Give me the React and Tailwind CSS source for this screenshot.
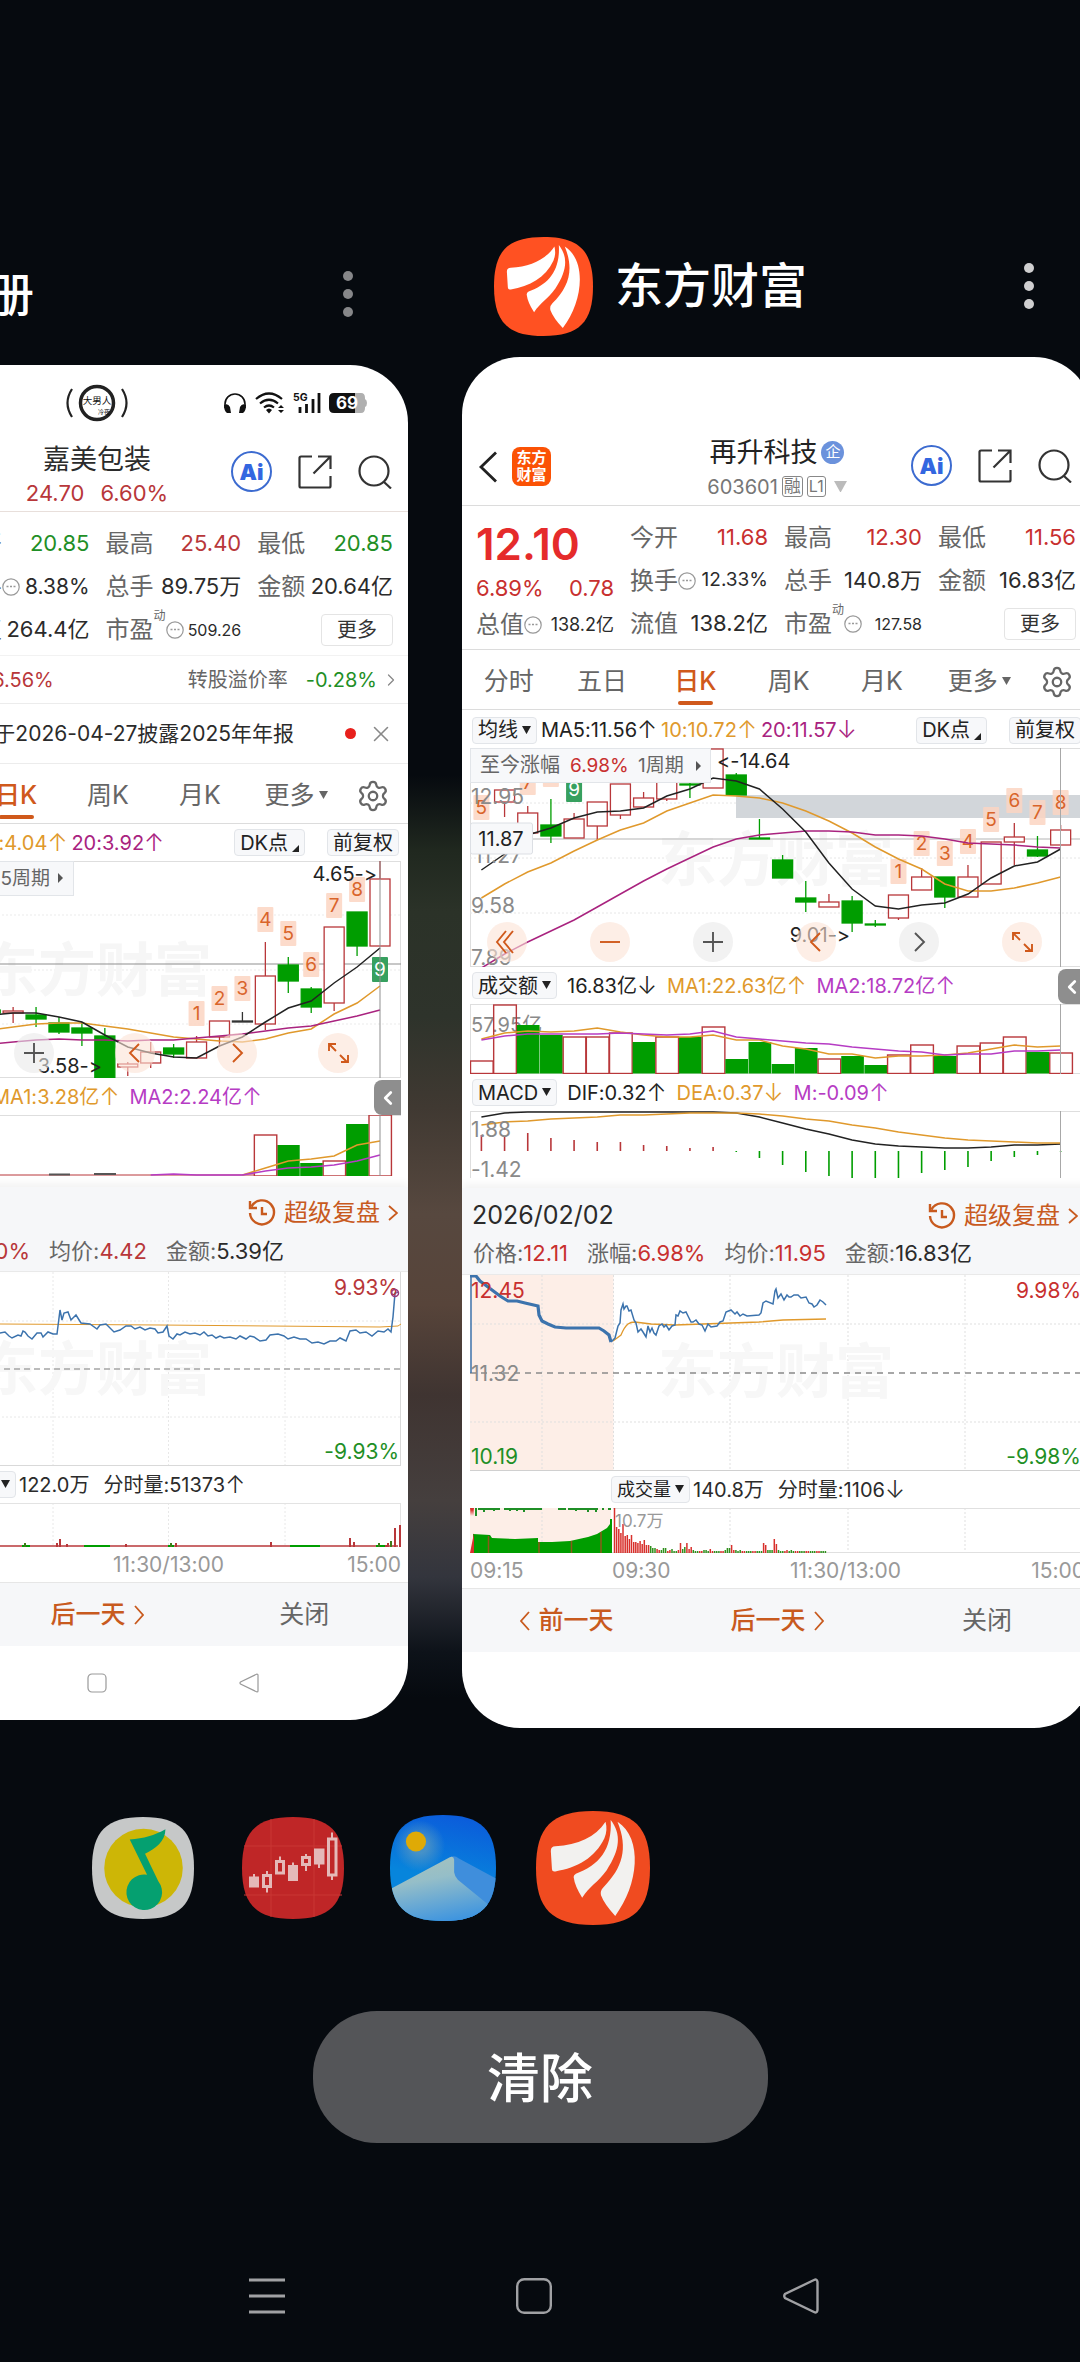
import React from 'react';
import { Settings, X, ChevronLeft, ChevronRight } from 'lucide-react';

const RED = '#b8373a';
const GREEN = '#009d00';
const ORANGE = '#e0992c';
const PURPLE = '#a9237f';
const VIOLET = '#b63cc4';
const BLUE = '#3c73ad';
const SQUIRCLE = 'M50 0C86 0 100 14 100 50S86 100 50 100 0 86 0 50 14 0 50 0Z';

// turns a list of y values into polyline points with a fixed step
const series = (ys, start, step) => ys.map((y, i) => `${(start + i * step).toFixed(1)},${y}`).join(' ');

// [top, bottom, high, low, up]
const mainCandles = [
  null, [42, 54, 42, 69, 1], [65, 85, 58, 85, 1], [77, 88, 51, 95, 0], [71, 90, 65, 90, 1],
  [54, 78, 54, 92, 1], [36, 67, 36, 71, 1], [50, 59, 44, 59, 1], [20, 51, 20, 53, 1], [36, 37, 29, 50, 0],
  [1, 40, 1, 40, 1], [27, 47, 25, 47, 0], [90, 91, 71, 91, 0], [112, 130, 107, 130, 0], [150, 154, 133, 164, 0],
  [154, 159, 146, 159, 1], [153, 175, 148, 184, 0], [176, 177, 172, 179, 0], [147, 170, 147, 172, 1],
  [129, 142, 120, 142, 1], [129, 149, 129, 160, 0], [129, 149, 117, 149, 1], [94, 136, 94, 136, 1],
  [89, 94, 75, 117, 1], [102, 108, 88, 109, 0], [82, 97, 77, 97, 1],
];
const mainMa5 = [122, 106, 87, 80, 70, 64, 63, 60, 48, 41, 30, 33, 41, 61, 84, 115, 141, 158, 161, 157, 155, 146, 130, 118, 114, 101];
const mainMa10 = [150, 136, 124, 115, 103, 92, 82, 75, 63, 55, 47, 48, 50, 55, 63, 73, 85, 99, 111, 121, 136, 143, 143, 140, 135, 129];
const mainMa20 = [220, 206, 194, 183, 172, 159, 146, 133, 121, 110, 99, 91, 87, 85, 83, 83, 84, 87, 87, 88, 91, 95, 96, 97, 99, 100];
const mainMarks = [
  [0, 59, '5'], [2, 34, '7'], [3, 26, '8'], [4, 41, '9', 1], [18, 123, '1'], [19, 95, '2'], [20, 105, '3'],
  [21, 93, '4'], [22, 71, '5'], [23, 52, '6'], [24, 64, '7'], [25, 54, '8'],
];
const mainVolume = [
  [57, 1], [1, 1], [21, 0], [31, 0], [33, 1], [33, 1], [29, 1], [38, 0], [33, 1], [33, 0], [23, 1], [55, 0], [38, 0],
  [60, 0], [44, 0], [55, 1], [52, 0], [61, 0], [51, 1], [41, 1], [52, 0], [42, 1], [39, 1], [33, 1], [48, 0], [49, 1],
];
const volMa1 = [35, 29, 27, 28, 27, 24, 28, 31, 33, 33, 31, 36, 36, 42, 45, 50, 50, 54, 52, 52, 51, 49, 45, 41, 43, 42];
const volMa2 = [36, 32, 30, 30, 30, 30, 29, 30, 31, 30, 27, 33, 35, 37, 39, 40, 43, 45, 47, 48, 51, 50, 50, 47, 47, 46];
const macdBars = [24, 25, 22, 27, 29, 31, 31, 34, 35, 37, 36, 41, 47, 54, 61, 65, 67, 67, 67, 62, 59, 56, 50, 46, 44, 41];
const dif = [6, 2, 1, 1, 1, 1, 1, 1, 1, 1, 1, 2, 6, 12, 18, 23, 29, 33, 35, 36, 37, 37, 36, 34, 34, 33];
const dea = [14, 11, 10, 8, 7, 6, 4, 4, 3, 2, 2, 2, 3, 5, 8, 10, 14, 17, 21, 24, 27, 29, 30, 31, 32, 32];

// newest first
const sideCandles = [
  [18, 85, 0, 85, 1], [51, 85, 51, 95, 0], [66, 142, 66, 150, 1], [128, 146, 126, 152, 0], [104, 120, 96, 132, 0],
  [115, 163, 81, 169, 1], [160, 161, 151, 161, 2], [160, 176, 160, 185, 1], [181, 197, 175, 197, 1], [187, 193, 183, 197, 0],
  [191, 202, 181, 207, 1], [203, 206, 201, 215, 1], [175, 217, 167, 217, 0], [167, 172, 161, 185, 0],
  [162, 171, 156, 173, 0], [154, 158, 146, 166, 0], [150, 152, 146, 162, 1], [149, 152, 149, 152, 0],
];
const sideMa5 = [87, 106, 122, 140, 147, 161, 176, 185, 197, 196, 192, 186, 174, 161, 156, 152, 152, 154];
const sideMa10 = [125, 142, 153, 168, 172, 178, 181, 180, 178, 176, 172, 168, 165, 162, 162, 163, 166, 169];
const sideMa20 = [149, 155, 160, 165, 167, 170, 173, 175, 177, 179, 179, 180, 179, 179, 178, 179, 181, 183];
const sideMarks = [
  [8, 152, '1'], [7, 137, '2'], [6, 127, '3'], [5, 58, '4'], [4, 72, '5'], [3, 103, '6'], [2, 44, '7'], [1, 28, '8'], [0, 108, '9', 1],
];
const sideVolume = [[0, 1], [9, 0], [46, 1], [48, 0], [30, 0], [20, 1]];

const minuteVolume = [
  45, 26, 24, 20, 29, 17, 18, 14, 18, 11, 11, 10, 12, 9, 13, 8, 8, 7, 5, 5, 4, 3, 3, 5, 5, 2, 3, 4, 2, 2, 3, 10, 4, 6, 10, 4,
  6, 3, 2, 2, 2, 2, 3, 3, 2, 4, 2, 2, 2, 2, 2, 2, 3, 5, 5, 8, 3, 3, 2, 3, 2, 2, 2, 2, 2, 2, 2, 2, 2, 2, 10, 8, 3, 3, 3, 14, 9,
  3, 2, 2, 2, 3, 2, 3, 2, 2, 2, 2, 2, 2, 2, 2, 2, 2, 2, 2, 2, 2, 2, 2,
];

function Candles({ data, start, step, width }) {
  return data.map((c, i) => {
    if (!c) return null;
    const [top, bottom, high, low, kind] = c;
    const x = start + i * step;
    const color = kind === 1 ? RED : kind === 2 ? '#333' : GREEN;
    return (
      <g key={i} stroke={color} strokeWidth="1.3">
        <path d={`M${x} ${high}V${top}M${x} ${bottom}V${low}`} />
        <rect x={x - width / 2} y={top} width={width} height={bottom - top} fill={kind === 1 ? '#fff' : color} />
      </g>
    );
  });
}

function Marks({ data, start, step }) {
  return data.map(([i, y, label, sell]) => (
    <g key={i}>
      <rect x={start + i * step - 8} y={y - 12} width="16" height="25" rx="1" fill={sell ? '#37a05f' : '#fbd5c2'} fillOpacity={sell ? 1 : 0.85} />
      <text x={start + i * step} y={y + 7} textAnchor="middle" fontSize="19" fill={sell ? '#fff' : '#d9642a'}>{label}</text>
    </g>
  ));
}

function Bars({ data, start, step, bottom }) {
  return data.map(([top, up], i) => (
    <rect
      key={i}
      x={start + i * step}
      y={top}
      width={Math.abs(step) - 0.5}
      height={bottom - top}
      fill={up ? 'none' : GREEN}
      stroke={up ? RED : GREEN}
      strokeWidth={up ? 1.4 : 0}
    />
  ));
}

function EastMoneyIcon({ className, dim }) {
  return (
    <svg viewBox="0 0 100 100" className={className} aria-hidden="true">
      <path d={SQUIRCLE} fill={dim ? '#f04b20' : '#ff5122'} />
      <g fill={dim ? '#f2f1ef' : '#fff'}>
        <path d="M13 35Q13 31 17 31C37 30 52 23 61 9.500Q63 17 60 24C52 41 36 50 17 53Q14 53.500 14 51Z" />
        <path d="M65.500 8C75 20 74 34 62 52C54 63 47 66 40.500 76Q34 66 33 58Q33 56 35 55C55 48 67 34 65.500 8Z" />
        <path d="M71.500 9.500C94 24 90 65 69.500 92Q60 82 57 74Q56 70 59 67C76 50 81 33 71.500 9.500Z" />
      </g>
    </svg>
  );
}

function MusicIcon({ className }) {
  return (
    <svg viewBox="0 0 100 100" className={className} aria-hidden="true">
      <path d={SQUIRCLE} fill="#c6c8c8" />
      <circle cx="50.500" cy="50" r="38.500" fill="#cdb606" />
      <path d="M37 22C51 21 61 18 72 12C72 24 62 31 52 36L65 63A17.500 17.500 0 1 1 54 56.500L37 22Z" fill="#05a070" />
    </svg>
  );
}

function CandleIcon({ className }) {
  return (
    <svg viewBox="0 0 102 102" className={className} aria-hidden="true">
      <path d={SQUIRCLE} transform="scale(1.02)" fill="#bf2627" />
      <path d="M2 29H100M2 78H100M29 2V100M72 2V100" stroke="#c93635" strokeWidth="1" />
      <g fill="#e4b9b8">
        <path d="M7 59.500H17V70.500H7ZM11 57H13V60H11ZM46 48H56V64H46ZM50 45.500H52V49H50ZM72 31.500H82.500V47.500H72ZM76 47H78V51H76Z" />
        <path d="M24 54H26V58H24ZM24 70H26V75.500H24ZM37 39.500H39V43H37ZM63 37H65V39H63ZM63 48H65V54H63ZM89 15.500H91V21H89ZM89 59H91V63H89Z" />
      </g>
      <path d="M21.500 58.500H28.500V69.500H21.500ZM34.500 44.500H41.500V56H34.500ZM60.500 40.500H67.500V47.500H60.500ZM86.500 22H94V58H86.500Z" fill="none" stroke="#e4b9b8" strokeWidth="3" />
    </svg>
  );
}

function GalleryIcon({ className }) {
  return (
    <svg viewBox="0 0 100 100" className={className} aria-hidden="true">
      <defs>
        <linearGradient id="sky" x1="0.600" y1="0" x2="0.400" y2="1">
          <stop offset="0" stopColor="#0b5cdb" />
          <stop offset="0.600" stopColor="#0785dc" />
        </linearGradient>
        <linearGradient id="dune" x1="0.300" y1="0" x2="0.600" y2="1">
          <stop offset="0" stopColor="#a5c2bd" />
          <stop offset="0.350" stopColor="#95bec8" />
          <stop offset="1" stopColor="#3f95df" />
        </linearGradient>
        <radialGradient id="glow">
          <stop offset="0.300" stopColor="#5f9cc0" stopOpacity="0.700" />
          <stop offset="1" stopColor="#5f9cc0" stopOpacity="0" />
        </radialGradient>
        <clipPath id="galleryClip">
          <path d={SQUIRCLE} />
        </clipPath>
      </defs>
      <g clipPath="url(#galleryClip)">
        <rect width="100" height="100" fill="url(#sky)" />
        <circle cx="28" cy="29" r="24" fill="url(#glow)" />
        <circle cx="24.500" cy="25" r="9.500" fill="#dfaa06" />
        <path d="M55 41Q60 37 65 41L100 60V100H50Z" fill="#3f8edc" />
        <path d="M0 70L56 40Q60 38 60.500 42V54Q61 58 64 61L92 84V100H0Z" fill="url(#dune)" />
      </g>
    </svg>
  );
}

const MoreDots = () => (
  <svg viewBox="0 0 10 46" className="w-[10px] h-[46px]" fill="currentColor">
    <circle cx="5" cy="5" r="5" />
    <circle cx="5" cy="23" r="5" />
    <circle cx="5" cy="41" r="5" />
  </svg>
);

const Caret = ({ className = 'w-[9px]' }) => (
  <svg viewBox="0 0 10 9" className={className} fill="currentColor" aria-hidden="true">
    <path d="M0 0H10L5 9Z" />
  </svg>
);

const InfoDots = () => (
  <svg viewBox="0 0 18 18" className="w-[18px] h-[18px] shrink-0 text-[#999]" aria-hidden="true">
    <circle cx="9" cy="9" r="8.200" fill="none" stroke="currentColor" strokeWidth="1.200" />
    <path d="M4.500 8.500h2M8 8.500h2M11.500 8.500h2" stroke="currentColor" strokeWidth="1.500" />
  </svg>
);

// indicator reading with its trend arrow
const Reading = ({ children, dir, color = 'text-[#222]' }) => (
  <span className={`flex items-center ${color}`}>
    {children}
    <span className="text-[24px] leading-6 font-light">{dir === 'up' ? '↑' : '↓'}</span>
  </span>
);

function HeaderActions({ className }) {
  return (
    <div className={`flex items-center justify-end gap-[26px] pb-[5px] ${className}`}>
      <button aria-label="AI" className="w-[41px] h-[41px] rounded-full border-2 border-[#3c6bd0] text-[#3366e0] font-black text-[22px] leading-none">
        Ai
      </button>
      <button aria-label="分享" className="text-[#333]">
        <svg viewBox="0 0 34 34" className="w-[34px] h-[34px]" fill="none" stroke="currentColor" strokeWidth="2.200">
          <path d="M14 1.500H3Q1.500 1.500 1.500 3V31Q1.500 32.500 3 32.500H31Q32.500 32.500 32.500 31V21" />
          <path d="M20 1.500H32.500V14M32.500 1.500L15.500 18.500" />
        </svg>
      </button>
      <button aria-label="搜索" className="text-[#333]">
        <svg viewBox="0 0 34 34" className="w-[34px] h-[34px]" fill="none" stroke="currentColor" strokeWidth="2.200">
          <circle cx="16" cy="16" r="14.500" />
          <path d="M26 27L33 33.500" />
        </svg>
      </button>
    </div>
  );
}

function Cell({ label, value, info, sup, size = 'text-[22px]', color = 'text-[#2b2b2b]' }) {
  return (
    <div className="flex items-center h-[43px] whitespace-nowrap">
      <span className="text-[24px] text-[#666]">{label}</span>
      {sup && <span className="text-[12px] text-[#666] self-start leading-4">{sup}</span>}
      {info && <InfoDots />}
      <span className={`ml-auto ${size} ${color}`}>{value}</span>
    </div>
  );
}

const MoreButton = () => (
  <div className="flex items-center justify-end h-[43px]">
    <button className="w-[72px] h-8 rounded border border-[#e4e4e4] text-[20px] leading-none text-[#333]">更多</button>
  </div>
);

function Tabs() {
  const tabs = ['分时', '五日', '日K', '周K', '月K', '更多'];
  return (
    <div className="flex items-center h-[60px] border-b border-[#dcdcdc] text-[25px] text-[#666]">
      {tabs.map((t) => (
        <button key={t} className="relative flex-1 h-full pt-1 flex items-center justify-center gap-1">
          <span className={t === '日K' ? 'text-[#d0591b] font-medium' : t === '更多' ? 'ml-2' : ''}>{t}</span>
          {t === '更多' && <Caret />}
          {t === '日K' && <span className="absolute bottom-1 w-[35px] h-1 rounded-full bg-[#d0591b]" />}
        </button>
      ))}
      <button aria-label="设置" className="w-[70px] pt-1 flex justify-center">
        <Settings size={34} strokeWidth={1.6} />
      </button>
    </div>
  );
}

const Chip = ({ children, size = 'text-[20px]' }) => (
  <button className={`flex items-center gap-1 h-[27px] px-[5px] rounded border border-[#e2e5e9] bg-[#f7f8fa] ${size} leading-none text-[#222] whitespace-nowrap shrink-0`}>
    {children}
  </button>
);

const ChartChips = () => (
  <div className="flex gap-[22px] shrink-0">
    <Chip>
      DK点
      <svg viewBox="0 0 8 8" className="w-[7px] self-end mb-[3px]" fill="currentColor"><path d="M8 0V8H0Z" /></svg>
    </Chip>
    <Chip>前复权</Chip>
  </div>
);

function ChartTools({ all }) {
  const pink = 'bg-[#fbe3d6]/60 text-[#d0591b]';
  const gray = 'bg-[#e9e9ea]/60 text-[#555]';
  const tools = [
    { name: '最早', d: 'M19 9L10 20L19 31M26 9L17 20L26 31', tone: pink },
    { name: '缩小', d: 'M10 20H30', tone: pink },
    { name: '放大', d: 'M10 20H30M20 10V30', tone: gray },
    { name: '左移', d: 'M24 11L15 20L24 29', tone: pink },
    { name: '右移', d: 'M16 11L25 20L16 29', tone: all ? gray : pink },
    { name: '全屏', d: 'M11 18V11H18M11 11L18 18M30 22V29H23M29 29L22 22', tone: pink },
  ];
  return (
    <div className="absolute inset-x-0 bottom-[5px] pl-[25px] pr-[50px] flex justify-between">
      {tools.map((t) => (
        <button key={t.name} aria-label={t.name} className={`w-10 h-10 rounded-full ${t.tone}`}>
          <svg viewBox="0 0 40 40" fill="none" stroke="currentColor" strokeWidth="1.900"><path d={t.d} /></svg>
        </button>
      ))}
    </div>
  );
}

const SideHandle = () => (
  <button aria-label="展开" className="absolute right-0 bottom-0 w-[27px] h-[35px] rounded-l-lg bg-[#8e8e8e] text-white flex items-center justify-center">
    <ChevronLeft size={22} strokeWidth={3} />
  </button>
);

const ReplayLink = () => (
  <a href="#replay" className="flex items-center gap-2 text-[24px] text-[#c85a1e]">
    <svg viewBox="0 0 28 28" className="w-7 h-7" fill="none" stroke="currentColor" strokeWidth="2.400">
      <path d="M3.500 7.500A12 12 0 1 1 2 14M2 2V9H9" />
      <path d="M14 8V15H19" />
    </svg>
    超级复盘
    <svg viewBox="0 0 10 16" className="w-[10px] h-4" fill="none" stroke="currentColor" strokeWidth="1.800"><path d="M1 1L9 8L1 15" /></svg>
  </a>
);

const Pair = ({ label, value, color = 'text-[#2b2b2b]' }) => (
  <span className="text-[#666] whitespace-nowrap">{label}:<span className={color}>{value}</span></span>
);

const DayNav = () => (
  <div className="flex items-center h-16 bg-[#f6f7f9] border-t border-[#e6e6e6] text-[25px]">
    <button className="flex-1 flex items-center justify-center gap-2 text-[#c85a1e] font-medium">
      <svg viewBox="0 0 10 20" className="w-[10px] h-5" fill="none" stroke="currentColor" strokeWidth="1.800"><path d="M9 1L1 10L9 19" /></svg>
      前一天
    </button>
    <button className="flex-1 flex items-center justify-center gap-2 text-[#c85a1e] font-medium">
      后一天
      <svg viewBox="0 0 10 20" className="w-[10px] h-5" fill="none" stroke="currentColor" strokeWidth="1.800"><path d="M1 1L9 10L1 19" /></svg>
    </button>
    <button className="flex-1 text-[#666]">关闭</button>
  </div>
);

function StatusBar() {
  return (
    <div className="grid grid-cols-[1fr_auto_1fr] items-center h-[72px] pt-1 text-black">
      <span />
      <svg viewBox="0 0 64 38" className="w-16 h-[38px]">
        <g fill="none" stroke="#222">
          <path d="M7 5Q-2 19 7 33M57 5Q66 19 57 33" strokeWidth="2.200" />
          <circle cx="32" cy="19" r="16.500" strokeWidth="3.500" />
        </g>
        <text x="32" y="20" textAnchor="middle" fontSize="9.500" fill="#111">大男人</text>
        <text x="39" y="30" textAnchor="middle" fontSize="6" fill="#111">冷夜</text>
      </svg>
      <div className="flex items-center justify-end gap-2 pr-[41px]">
        <svg viewBox="0 0 24 22" className="w-6 h-[22px]">
          <path d="M2 16V12A10 10 0 0 1 22 12V16" fill="none" stroke="#111" strokeWidth="1.600" />
          <path d="M1 13Q5 11 7 15L8 21H4Q1 19 1 13ZM23 13Q19 11 17 15L16 21H20Q23 19 23 13Z" fill="#111" />
        </svg>
        <svg viewBox="0 0 30 22" className="w-[30px] h-[22px]">
          <path d="M1 7Q14 -4 27 7M5 11.500Q14 4 23 11.500M9 15.500Q14 11.500 19 15.500" fill="none" stroke="#111" strokeWidth="2.200" />
          <path d="M11 18Q14 15 17 18L14 21.500ZM23 16L26 13L29 16ZM23 18L26 21L29 18Z" fill="#111" />
        </svg>
        <svg viewBox="0 0 28 22" className="w-7 h-[22px]">
          <text x="0" y="9" fontSize="10.500" fontWeight="700" fill="#111">5G</text>
          <path d="M7 15V21M13.500 12V21M20 7V21M26 1V21" stroke="#111" strokeWidth="2.800" />
        </svg>
        <svg viewBox="0 0 38 20" className="w-[38px] h-5">
          <path d="M26 0H32Q36 0 36 5V6Q38 7 38 10T36 14V15Q36 20 32 20H26Z" fill="#b0b0b0" />
          <path d="M5 0H26V20H5Q0 20 0 15V5Q0 0 5 0Z" fill="#111" />
          <text x="18" y="16" textAnchor="middle" fontSize="17" fontWeight="700" fill="#fff">69</text>
        </svg>
      </div>
    </div>
  );
}

function SideCard() {
  return (
    <article className="relative w-[622px] shrink-0 bg-white rounded-[58px] overflow-hidden">
      <StatusBar />
      <header className="grid grid-cols-[1fr_auto_1fr] items-center h-[75px] border-b border-[#e8dfdb]">
        <span />
        <div className="text-center pt-[3px]">
          <h2 className="text-[27px] leading-[34px] text-[#2b2b2b]">嘉美包装</h2>
          <p className="flex gap-4 text-[22px] leading-[32px] text-[#b8373a]"><span>24.70</span><span>6.60%</span></p>
        </div>
        <HeaderActions className="pr-4" />
      </header>

      <section className="grid grid-cols-4 gap-x-4 pl-4 pr-[15px] pt-[10px] pb-1 border-b border-[#f2f2f2]">
        <div />
        <div>
          <Cell label="今开" value="20.85" color="text-[#1f8f26]" />
          <Cell label="换手" info value="8.38%" size="text-[21px]" />
          <Cell label="流值" value="264.4亿" />
        </div>
        <div>
          <Cell label="最高" value="25.40" color="text-[#b8373a]" />
          <Cell label="总手" value="89.75万" />
          <Cell label="市盈" sup="动" info size="text-[16px]" value="509.26" />
        </div>
        <div>
          <Cell label="最低" value="20.85" color="text-[#1f8f26]" />
          <Cell label="金额" value="20.64亿" />
          <MoreButton />
        </div>
      </section>

      <div className="flex items-center justify-end h-12 pr-[7px] border-b border-[#ececec] text-[20px]">
        <span className="text-[#b8373a]">6.56%</span>
        <span className="ml-[134px] text-[#666]">转股溢价率</span>
        <span className="ml-[18px] text-[#1f8f26]">-0.28%</span>
        <ChevronRight size={20} strokeWidth={1.5} className="ml-1 text-[#888]" />
      </div>
      <div className="flex items-center justify-end h-[60px] pr-[14px] border-b border-[#ececec] text-[21px] text-[#2b2b2b] whitespace-nowrap">
        公司将于2026-04-27披露2025年年报
        <span className="ml-[51px] w-[11px] h-[11px] rounded-full bg-[#e8201c]" />
        <button aria-label="关闭公告" className="ml-3 text-[#888]"><X size={26} strokeWidth={1.4} /></button>
      </div>

      <Tabs />

      <div className="flex items-center justify-end h-[37px] pr-[9px] gap-1 text-[20px] whitespace-nowrap">
        <Reading dir="up" color="text-[#e0992c]">10:4.04</Reading>
        <Reading dir="up" color="text-[#a9237f] mr-[66px]">20:3.92</Reading>
        <ChartChips />
      </div>

      <div className="relative pl-2 pr-[7px]">
        <svg viewBox="-206 0 607 217" className="block w-full h-auto">
          <path d="M-206 0.500H401M-206 216.500H401M400.500 0V217" stroke="#dedede" />
          <path d="M-206 54H401M-206 109H401M-206 163H401" stroke="#ebebeb" strokeDasharray="2 2" />
          <text x="-20" y="130" fontSize="58" fontWeight="700" fill="#f6f6f6">东方财富</text>
          <path d="M-206 103H401" stroke="#8f8f8f" />
          <Candles data={sideCandles} start={380} step={-22.93} width={20} />
          <g fill="none" strokeWidth="1.500">
            <polyline points={series(sideMa10, 380, -22.93)} stroke={ORANGE} />
            <polyline points={series(sideMa20, 380, -22.93)} stroke={PURPLE} />
            <polyline points={series(sideMa5, 380, -22.93)} stroke="#222" />
          </g>
          <Marks data={sideMarks} start={380} step={-22.93} />
          <path d="M380 0V217" stroke="#8f8f8f" />
          <rect x="-206" y="0.500" width="279.500" height="34" fill="#f7f8fa" stroke="#e2e5e9" />
          <text x="50" y="24" textAnchor="end" fontSize="19" fill="#666">5周期</text>
          <path d="M58 12L63 17L58 22Z" fill="#555" />
          <text x="377" y="20" textAnchor="end" fontSize="20" fill="#222">4.65-&gt;</text>
          <text x="102" y="212" textAnchor="end" fontSize="20" fill="#222">3.58-&gt;</text>
        </svg>
        <ChartTools />
      </div>

      <div className="relative flex items-center justify-end h-[37px] mr-[7px] pr-[139px] gap-[10px] text-[20px] whitespace-nowrap">
        <Reading dir="up" color="text-[#e0992c]">MA1:3.28亿</Reading>
        <Reading dir="up" color="text-[#b63cc4]">MA2:2.24亿</Reading>
        <SideHandle />
      </div>
      <div className="pl-2 pr-[7px]">
        <svg viewBox="-206 0 607 61" className="block w-full h-auto">
          <path d="M-206 0.500H401" stroke="#dedede" />
          <Bars data={sideVolume} start={369} step={-22.93} bottom={61} />
          <path d="M-206 60H255" stroke={RED} />
          <path d="M94 59H116M49 59.500H70" stroke="#555" strokeWidth="2" />
          <g fill="none" strokeWidth="1.500">
            <polyline points={series([26, 30, 41, 44, 46, 53, 60], 380, -22.93)} stroke={ORANGE} />
            <polyline points={series([40, 46, 50, 52, 53, 56, 60, 60, 60, 59, 60], 380, -22.93)} stroke={VIOLET} />
          </g>
          <path d="M380 0V61" stroke="#8f8f8f" />
        </svg>
      </div>

      <div className="mt-[11px] h-[85px] bg-[#f6f7f9] border-b border-[#e9e9e9] shadow-[0_-4px_8px_#f3f3f3]">
        <div className="flex items-center justify-end h-[47px] pt-1 pr-[10px]"><ReplayLink /></div>
        <div className="flex items-center justify-end gap-[19px] h-[34px] pr-[124px] text-[22px]">
          <Pair label="涨幅" value="6.60%" color="text-[#b8373a]" />
          <Pair label="均价" value="4.42" color="text-[#b8373a]" />
          <Pair label="金额" value="5.39亿" />
        </div>
      </div>

      <div className="pl-2 pr-[7px]">
        <svg viewBox="-206 0 607 194" className="block w-full h-auto">
          <path d="M53 0V194M168.500 0V194M285 0V194M-206 49H401M-206 145H401" stroke="#e8e8e8" strokeDasharray="2 2" />
          <path d="M-206 193.500H401M400.500 0V194" stroke="#d9d9d9" />
          <text x="-20" y="118" fontSize="58" fontWeight="700" fill="#f7f7f7">东方财富</text>
          <path d="M-206 97H401" stroke="#a5a5a5" strokeWidth="1.500" strokeDasharray="6 4" />
          <path d="M-206 52H0L160 53L380 55L398 54L401 52" stroke={ORANGE} fill="none" />
          <polyline
            fill="none"
            stroke={BLUE}
            strokeWidth="1.500"
            points="-20,60 0,61 5,60 9,64 12,66 18,63 21,64 23,59 25,60 28,64 32,67 37,61 41,61 43,65 48,60 53,62 57,62 58,54 60,38 62,48 64,41 68,40 71,48 76,43 81,51 90,52 97,57 100,53 106,52 114,60 120,58 126,54 131,54 135,57 140,55 145,58 150,56 155,57 158,61 163,60 167,54 169,64 173,67 177,62 180,63 185,60 190,62 195,61 200,63 204,60 208,64 212,63 216,66 220,64 224,66 230,65 236,67 240,64 246,67 250,64 254,65 260,69 266,68 270,63 278,62 284,64 288,67 294,65 300,67 306,67 312,71 318,70 324,72 330,69 336,69 340,66 346,69 350,59 356,58 360,61 366,60 372,64 378,59 384,60 388,57 391,60 393,45 395,21 398,20"
          />
          <text x="399" y="23" textAnchor="end" fontSize="21" fill={RED}>9.93%</text>
          <text x="399" y="187" textAnchor="end" fontSize="21" fill="#1f8f26">-9.93%</text>
          <circle cx="395" cy="21" r="3.500" fill="none" stroke="#9b3a7a" strokeWidth="1.500" />
        </svg>
      </div>
      <div className="flex items-center h-[37px] pl-[151px] gap-[3px] text-[20px] text-[#2b2b2b] whitespace-nowrap">
        <Chip size="text-[18px]">成交量<Caret /></Chip>
        122.0万
        <span className="ml-2" />
        <Reading dir="up" color="text-[#2b2b2b]">分时量:51373</Reading>
      </div>
      <div className="pl-2 pr-[7px]">
        <svg viewBox="-206 0 607 44" className="block w-full h-auto">
          <path d="M53 0V44M168.500 0V44M285 0V44" stroke="#e8e8e8" strokeDasharray="2 2" />
          <path d="M-206 0.500H401M400.500 0V44" stroke="#e3e3e3" />
          <path d="M-206 43H398" stroke={RED} strokeWidth="1.500" />
          <path d="M22 43H30M84 43H110M168 43H174M290 43H320M376 43H385" stroke={GREEN} strokeWidth="2" />
          <path d="M60 44V36M57 44V40M67 44V41M126 44V41M176 44V40M271 44V39M350 44V35M354 44V39M386 44V42M388 44V40M395 44V25M400 44V22" stroke={RED} strokeWidth="2" />
          <path d="M25 44V40M171 44V40M379 44V40M391 44V38" stroke="#3f7a1a" strokeWidth="2" />
        </svg>
      </div>
      <div className="relative flex items-center justify-between h-[35px] pl-2 pr-[7px] text-[21px] text-[#999]">
        <span>09:15</span>
        <span className="absolute left-[327px]">11:30/13:00</span>
        <span>15:00</span>
      </div>
      <DayNav />
      <div className="flex items-center justify-center gap-[132px] h-[74px] text-[#999]">
        <span className="w-5" />
        <svg viewBox="0 0 20 20" className="w-5 h-5" fill="none" stroke="currentColor" strokeWidth="1.200"><rect x="1" y="1" width="18" height="18" rx="4" /></svg>
        <svg viewBox="0 0 20 20" className="w-5 h-5" fill="none" stroke="currentColor" strokeWidth="1.200"><path d="M19 2V18Q19 19 18 19L1.500 11Q0.500 10 1.500 9L18 1Q19 1 19 2Z" /></svg>
      </div>
    </article>
  );
}

function MainCard() {
  return (
    <article className="relative bg-white rounded-[58px] overflow-hidden">
      <header className="grid grid-cols-[1fr_auto_1fr] items-center h-[149px] pt-[74px] border-b border-[#dcdcdc]">
        <div className="flex items-center gap-[14px] pl-4 pb-[3px]">
          <button aria-label="返回" className="text-[#222]">
            <svg viewBox="0 0 20 32" className="w-5 h-8" fill="none" stroke="currentColor" strokeWidth="2.800"><path d="M18 1.500L3 16L18 30.500" /></svg>
          </button>
          <span className="w-[39px] h-[39px] rounded-lg bg-[#fb5205] text-white text-[15px] leading-[17px] font-bold text-center pt-[2px]">东方<br />财富</span>
        </div>
        <div className="flex flex-col items-center">
          <h2 className="flex items-center gap-1 pt-[3px] text-[27px] leading-[34px] text-[#222]">
            再升科技
            <span className="w-[23px] h-[23px] rounded-full bg-[#6b92dc] text-white text-[15px] leading-[22px] text-center">企</span>
          </h2>
          <p className="flex items-center gap-1 text-[20px] leading-[34px] text-[#777]">
            603601
            <span className="h-[21px] px-[1px] border border-[#888] rounded-[3px] text-[17px] leading-[19px]">融</span>
            <span className="h-[21px] px-[1px] border border-[#888] rounded-[3px] text-[16px] leading-[19px]">L1</span>
            <Caret className="w-[13px] ml-1 text-[#bbb]" />
          </p>
        </div>
        <HeaderActions className="pr-5" />
      </header>

      <section className="grid grid-cols-4 gap-x-4 pl-[14px] pr-4 pt-[10px] pb-1 border-b border-[#dcdcdc]">
        <div>
          <p className="h-14 text-[44px] leading-[56px] font-semibold text-[#e52b2b]">12.10</p>
          <p className="flex justify-between h-8 text-[22px] leading-8 text-[#c8302f]"><span>6.89%</span><span>0.78</span></p>
          <div className="flex items-center h-[41px] whitespace-nowrap">
            <span className="text-[24px] text-[#666]">总值</span>
            <InfoDots />
            <span className="ml-auto text-[18px] text-[#2b2b2b]">138.2亿</span>
          </div>
        </div>
        <div>
          <Cell label="今开" value="11.68" color="text-[#c8302f]" />
          <Cell label="换手" info size="text-[19px]" value="12.33%" />
          <Cell label="流值" value="138.2亿" />
        </div>
        <div>
          <Cell label="最高" value="12.30" color="text-[#c8302f]" />
          <Cell label="总手" value="140.8万" />
          <Cell label="市盈" sup="动" info size="text-[16px]" value="127.58" />
        </div>
        <div>
          <Cell label="最低" value="11.56" color="text-[#c8302f]" />
          <Cell label="金额" value="16.83亿" />
          <MoreButton />
        </div>
      </section>

      <Tabs />

      <div className="flex items-center h-[38px] pt-[2px] pl-[10px] pr-[11px] gap-1 text-[20px] whitespace-nowrap">
        <Chip>均线<Caret /></Chip>
        <Reading dir="up">MA5:11.56</Reading>
        <Reading dir="up" color="text-[#e0992c]">10:10.72</Reading>
        <Reading dir="down" color="text-[#a9237f] mr-auto">20:11.57</Reading>
        <ChartChips />
      </div>

      <div className="relative pl-2 pr-[7px]">
        <svg viewBox="0 0 615 219" className="block w-full h-auto">
          <path d="M0 0.500H615M0 218.500H615M0.500 0V219" stroke="#dedede" />
          <path d="M0 55H615M0 110H615M0 165H615" stroke="#e6e6e6" strokeDasharray="2 2" />
          <text x="188" y="133" fontSize="59" fontWeight="700" fill="#f6f6f6">东方财富</text>
          <rect x="266" y="47" width="349" height="23" fill="#d2d6da" />
          <path d="M0 91H615" stroke="#b5b5b5" />
          <Candles data={mainCandles} start={11.4} step={23.17} width={20} />
          <Marks data={mainMarks} start={11.4} step={23.17} />
          <g fill="none" strokeWidth="1.500">
            <polyline points={series(mainMa10, 11.4, 23.17)} stroke={ORANGE} />
            <polyline points={series(mainMa20, 11.4, 23.17)} stroke={PURPLE} />
            <polyline points={series(mainMa5, 11.4, 23.17)} stroke="#222" />
          </g>
          <g fontSize="21" fill="#8a8a8a">
            <text x="1" y="56">12.95</text>
            <text x="4" y="115">11.27</text>
            <text x="1" y="165">9.58</text>
            <text x="1" y="217">7.89</text>
          </g>
          <rect x="0.500" y="75" width="62" height="31" rx="2" fill="#f7f8fa" stroke="#dcdfe4" />
          <text x="31" y="98" textAnchor="middle" fontSize="20" fill="#222">11.87</text>
          <rect x="0.500" y="0.500" width="240" height="34" fill="#f7f8fa" stroke="#e2e5e9" />
          <g fontSize="20" fill="#666">
            <text x="10" y="24">至今涨幅</text>
            <text x="100" y="24" fill="#c8302f" fontSize="19">6.98%</text>
            <text x="168" y="24" fontSize="19">1周期</text>
          </g>
          <path d="M226 13L231 18L226 23Z" fill="#555" />
          <text x="247" y="20" fontSize="20" fill="#222">&lt;-14.64</text>
          <text x="380" y="194" textAnchor="end" fontSize="20" fill="#222">9.01-&gt;</text>
          <path d="M590.500 0V219" stroke="#a8a8a8" />
        </svg>
        <ChartTools all />
      </div>

      <div className="relative flex items-center h-[37px] pl-[10px] mr-[7px] gap-[10px] text-[20px] whitespace-nowrap">
        <Chip>成交额<Caret /></Chip>
        <Reading dir="down">16.83亿</Reading>
        <Reading dir="up" color="text-[#e0992c]">MA1:22.63亿</Reading>
        <Reading dir="up" color="text-[#b63cc4]">MA2:18.72亿</Reading>
        <SideHandle />
      </div>
      <div className="pl-2 pr-[7px]">
        <svg viewBox="0 0 615 70" className="block w-full h-auto">
          <path d="M0 0.500H615M0 69.500H615M0.500 0V70" stroke="#dedede" />
          <text x="1" y="28" fontSize="20" fill="#8a8a8a">57.95亿</text>
          <Bars data={mainVolume} start={0.5} step={23.17} bottom={69.5} />
          <g fill="none" strokeWidth="1.500">
            <polyline points={series(volMa1, 11.4, 23.17)} stroke={ORANGE} />
            <polyline points={series(volMa2, 11.4, 23.17)} stroke={VIOLET} />
          </g>
          <path d="M590.500 0V70" stroke="#a8a8a8" />
        </svg>
      </div>

      <div className="flex items-center h-[37px] pl-[10px] gap-[10px] text-[20px] whitespace-nowrap">
        <Chip>MACD<Caret /></Chip>
        <Reading dir="up">DIF:0.32</Reading>
        <Reading dir="down" color="text-[#e0992c]">DEA:0.37</Reading>
        <Reading dir="up" color="text-[#b63cc4]">M:-0.09</Reading>
      </div>
      <div className="pl-2 pr-[7px]">
        <svg viewBox="0 0 615 67" className="block w-full h-auto">
          <path d="M0 0.500H615M0.500 0V67" stroke="#dedede" />
          {macdBars.map((y, i) => (
            <path key={i} d={`M${11.4 + i * 23.17} 40V${y}`} stroke={y < 40 ? RED : GREEN} strokeWidth="1.6" />
          ))}
          <g fill="none" strokeWidth="1.500">
            <polyline points={series(dif, 11.4, 23.17)} stroke="#222" />
            <polyline points={series(dea, 11.4, 23.17)} stroke={ORANGE} />
          </g>
          <text x="1" y="26" fontSize="21" fill="#8a8a8a">1.88</text>
          <text x="1" y="66" fontSize="21" fill="#8a8a8a">-1.42</text>
          <path d="M590.500 0V67" stroke="#a8a8a8" />
        </svg>
      </div>

      <div className="mt-[10px] h-[87px] bg-[#f6f7f9] border-b border-[#e9e9e9] shadow-[0_-4px_8px_#f3f3f3]">
        <div className="flex items-center justify-between h-12 pt-2 pl-[10px] pr-[14px]">
          <h3 className="text-[25px] text-[#2b2b2b]">2026/02/02</h3>
          <ReplayLink />
        </div>
        <div className="flex items-center gap-[19px] h-[34px] pl-[11px] text-[22px]">
          <Pair label="价格" value="12.11" color="text-[#c8302f]" />
          <Pair label="涨幅" value="6.98%" color="text-[#c8302f]" />
          <Pair label="均价" value="11.95" color="text-[#c8302f]" />
          <Pair label="金额" value="16.83亿" />
        </div>
      </div>

      <div className="pl-2 pr-[7px]">
        <svg viewBox="0 0 615 196" className="block w-full h-auto">
          <rect width="143.500" height="196" fill="#fdeee7" />
          <path d="M72 0V196M143.500 0V196M260 0V196M378 0V196M495 0V196M0 49H615M0 147H615" stroke="#dfdfdf" strokeDasharray="2 2" />
          <path d="M0 195.500H615M614.500 0V196" stroke="#d0d0d0" />
          <text x="188" y="118" fontSize="59" fontWeight="700" fill="#f7f7f7">东方财富</text>
          <path d="M0 98H615" stroke="#8a8a8a" strokeWidth="1.300" strokeDasharray="6 5" />
          <path d="M143 66L151 60C156 48 160 47 165 47L181 49L205 50L261 48L289 47L313 45L356 44" stroke={ORANGE} fill="none" strokeWidth="1.300" />
          <g fill="none" stroke={BLUE}>
            <path d="M1 98V0" strokeWidth="1.500" />
            <polyline strokeWidth="3.200" points="0,1 6,1 10,6 14,9 22,15 30,21 38,26 47,26 55,28 68,31 69,40 72,46 78,49 85,52 96,53 129,53 134,56 139,60 141,67" />
            <polyline
              strokeWidth="1.500"
              points="141,67 145,63 148,51 150,48 151,35 153,29 154,34 156,31 157,31 159,36 161,35 164,45 166,48 168,57 171,54 173,57 176,62 178,51 180,57 182,53 184,58 186,60 189,51 192,49 194,52 196,50 199,55 202,51 205,50 206,40 208,41 210,36 213,38 216,37 219,43 221,47 223,47 226,45 229,49 232,50 235,56 238,49 241,52 247,51 250,47 253,46 256,37 261,35 265,39 267,37 270,41 273,39 277,41 289,40 291,38 293,28 296,26 303,29 305,16 306,14 308,23 311,19 314,25 317,20 319,22 321,22 324,20 328,20 331,23 336,22 339,28 342,29 344,32 347,30 350,25 353,27 356,30"
            />
          </g>
          <g fontSize="21">
            <text x="1" y="23" fill="#c8302f">12.45</text>
            <text x="1" y="106" fill="#8a8a8a">11.32</text>
            <text x="1" y="189" fill="#1f8f26">10.19</text>
            <text x="611" y="23" textAnchor="end" fill="#c8302f">9.98%</text>
            <text x="611" y="189" textAnchor="end" fill="#1f8f26">-9.98%</text>
          </g>
        </svg>
      </div>
      <div className="flex items-center h-[37px] pl-[149px] gap-[3px] text-[20px] text-[#2b2b2b] whitespace-nowrap">
        <Chip size="text-[18px]">成交量<Caret /></Chip>
        140.8万
        <span className="ml-2" />
        <Reading dir="down" color="text-[#2b2b2b]">分时量:1106</Reading>
      </div>
      <div className="pl-2 pr-[7px]">
        <svg viewBox="0 0 615 45" className="block w-full h-auto">
          <rect width="141" height="45" fill="#fdeee7" />
          <path d="M72 0V45M260 0V45M378 0V45M495 0V45" stroke="#dfdfdf" strokeDasharray="2 2" />
          <path d="M143 0.500H615M0 44.500H615" stroke="#e0e0e0" />
          <path d="M3 26L20 27L22 30L45 31L68 30V34L82 34L100 33L118 29L127 26L137 20L140 16V11H142V45H3Z" fill={GREEN} />
          <path d="M0 45L4 25V45ZM0 0H4L3 8L2 2L1 8Z" fill="#d8302c" />
          <path d="M6 0V8M8 1H30M14 2V4M24 2V3M34 1H72M40 1V3M47 1V3M54 1V4M60 1V2M88 1H96M98 1H128M106 2V3M118 2V4M126 2V4M132 1H134M138 1H141" stroke="#1f8f26" strokeWidth="2" />
          <path d="M18.500 28V45M69 34V45M101.500 33V45M131 24V45" stroke="#8a5a1a" strokeWidth="1.500" />
          {minuteVolume.map((h, i) => (
            <path key={i} d={`M${(144.5 + i * 2.13).toFixed(1)} 45V${45 - h}`} stroke={i < 12 || i % 5 < 2 || h > 8 ? '#d8302c' : '#2f8f1c'} strokeWidth="1.500" />
          ))}
          <text x="145" y="19" fontSize="17" fill="#999">10.7万</text>
        </svg>
      </div>
      <div className="relative flex items-center h-[35px] pl-2 pr-[7px] text-[21px] text-[#999]">
        <span className="flex-1">09:15</span>
        <span className="absolute left-[150px]">09:30</span>
        <span className="absolute left-[328px]">11:30/13:00</span>
        <span>15:00</span>
      </div>
      <DayNav />
      <div className="h-[76px]" />
    </article>
  );
}

export default function App() {
  const dock = [
    { name: '音乐', icon: <MusicIcon className="w-[102px] h-[102px]" /> },
    { name: '行情', icon: <CandleIcon className="w-[102px] h-[102px]" /> },
    { name: '相册', icon: <GalleryIcon className="w-[106px] h-[106px]" /> },
    { name: '东方财富', icon: <EastMoneyIcon dim className="w-[114px] h-[114px]" /> },
  ];
  return (
    <main className="min-h-screen overflow-hidden bg-[#060a0f] pt-[215px] font-['Inter','Noto_Sans_CJK_SC',sans-serif] [font-feature-settings:'calt'_0]">
      <div className="flex items-start gap-[54px] bg-[linear-gradient(#060a0f_37%,#20281f_42%,#2b3228_46%,#2e332b_53%,#403932_59%,#57483f_66%,#57443a_72%,#3f3431_78%,#453f3e_85%,#33353d_90%,#0d1219_95%,#060a0f_98%)]">
        <section className="w-[408px] shrink-0 pt-2">
          <div className="flex items-center justify-between h-[142px] pr-[55px] text-[#868789]">
            <h1 className="w-[34px] flex justify-end text-[46px] font-medium text-white whitespace-nowrap">相册</h1>
            <button aria-label="更多选项"><MoreDots /></button>
          </div>
          <div className="flex justify-end">
            <SideCard />
          </div>
        </section>
        <section className="flex-1 min-w-0 -mr-3">
          <div className="flex items-center h-[142px] pl-8 pr-[58px] text-[#cfcfd0]">
            <EastMoneyIcon className="w-[99px] h-[99px]" />
            <h1 className="ml-[22px] mr-auto text-[48px] font-medium text-white">东方财富</h1>
            <button aria-label="更多选项"><MoreDots /></button>
          </div>
          <MainCard />
        </section>
      </div>

      <div className="flex mt-[83px] pl-[68px]">
        {dock.map((app) => (
          <button key={app.name} aria-label={app.name} className="w-[150px] h-[114px] flex items-center justify-center">
            {app.icon}
          </button>
        ))}
      </div>

      <div className="flex justify-center mt-[86px]">
        <button className="w-[455px] h-[132px] pt-[6px] rounded-[64px] bg-[#545558] text-[53px] font-medium text-white">清除</button>
      </div>

      <nav className="flex justify-center gap-[231px] mt-[117px] pb-[30px] pr-[12px] h-[102px] items-center text-[#a0a1a4]">
        <button aria-label="任务">
          <svg viewBox="0 0 36 36" className="w-9 h-9" stroke="currentColor" strokeWidth="3"><path d="M0 2H36M0 18H36M0 34H36" /></svg>
        </button>
        <button aria-label="主页">
          <svg viewBox="0 0 36 36" className="w-9 h-9" fill="none" stroke="currentColor" strokeWidth="2.400"><rect x="1.200" y="1.200" width="33.600" height="33.600" rx="7" /></svg>
        </button>
        <button aria-label="返回桌面">
          <svg viewBox="0 0 36 36" className="w-9 h-9" fill="none" stroke="currentColor" strokeWidth="2.400"><path d="M34.500 4V32Q34 35.500 31 34L2 20Q0.500 18 2 16L31 2Q34 0.500 34.500 4Z" /></svg>
        </button>
      </nav>
    </main>
  );
}
